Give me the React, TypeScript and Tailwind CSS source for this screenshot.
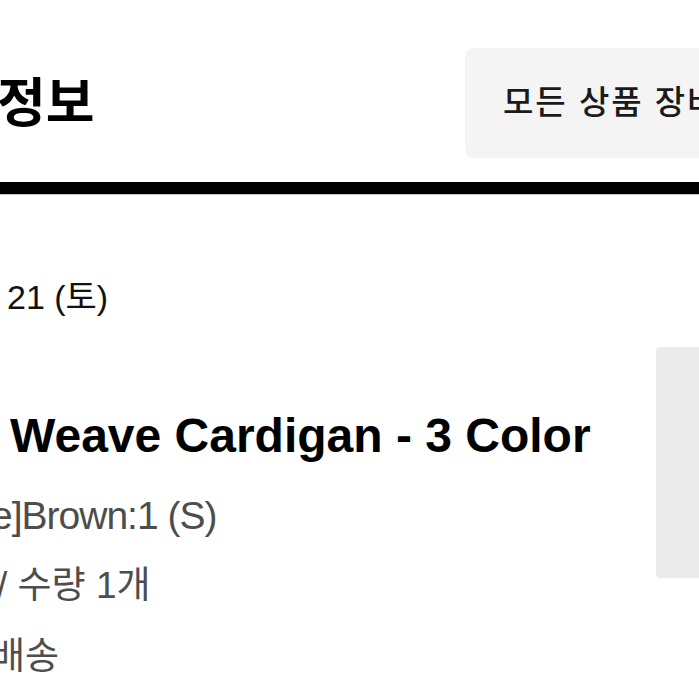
import React from "react";

export default function App() {
  const font = { fontFamily: '"Liberation Sans", "Noto Sans CJK KR", sans-serif' };
  return (
    <div className="w-[699px] h-[699px] overflow-hidden bg-white" style={font}>
      <div className="w-[760px] flex flex-col">
        {/* header */}
        <div className="pt-[48px] flex items-center justify-between">
          <h1 className="-ml-[3px] text-[53px] leading-none font-bold text-black whitespace-nowrap">정보</h1>
          <div className="w-[295px] h-[110px] shrink-0 rounded-lg bg-[#f4f4f4] flex items-center pl-[38px]">
            <span className="text-[33px] tracking-[2px] font-medium text-[#1a1a1a] whitespace-nowrap">모든 상품 장바구니</span>
          </div>
        </div>
        <div className="mt-[24px] h-[12px] bg-black" />
        <div className="h-px bg-[#c4c4c4]" />

        {/* date */}
        <div className="mt-[82px] ml-[7px] text-[34px] leading-[40px] text-[#111] whitespace-nowrap">21 (토)</div>

        {/* item row */}
        <div className="mt-[30px] flex">
          <div className="flex-1 flex flex-col min-w-0">
            <div className="mt-[61px] ml-[10px] text-[48px] leading-[56px] font-bold text-black whitespace-nowrap">
              Weave Cardigan - 3 Color
            </div>
            <div className="mt-[30px] -ml-[9px] text-[39px] leading-[44px] tracking-[-1px] text-[#4d4d4d] whitespace-nowrap">
              e]Brown:1 (S)
            </div>
            <div className="mt-[26px] -ml-[3px] text-[37px] leading-[44px] text-[#4d4d4d] whitespace-nowrap">
              / 수량 1개
            </div>
            <div className="mt-[27px] -ml-[9px] text-[37px] leading-[44px] text-[#4d4d4d] whitespace-nowrap">
              배송
            </div>
          </div>
          <div className="w-[104px] h-[231px] shrink-0 rounded-sm bg-[#ebebeb]" />
        </div>
      </div>
    </div>
  );
}
